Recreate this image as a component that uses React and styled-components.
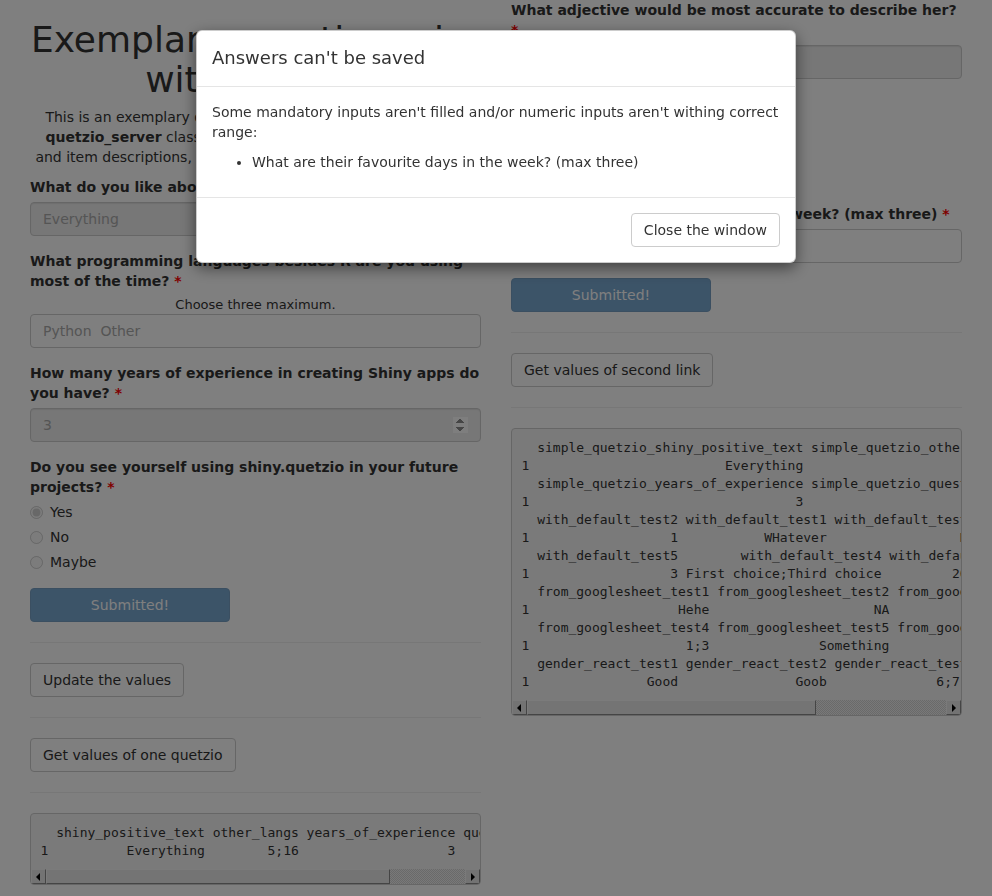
import React from 'react';
import styled, { createGlobalStyle } from 'styled-components';

const GlobalStyle = createGlobalStyle`
  * {
    box-sizing: border-box;
  }
  html,
  body {
    margin: 0;
    padding: 0;
  }
  body {
    font-family: "DejaVu Sans", "Liberation Sans", sans-serif;
    font-size: 14px;
    line-height: 20px;
    color: #333;
    background: #fff;
  }
  input[type='number']::-webkit-inner-spin-button {
    opacity: 1;
  }
`;

const Page = styled.div`
  display: grid;
  grid-template-columns: 451px 451px;
  column-gap: 30px;
  padding: 0 30px;
  align-items: start;
`;

const Column = styled.div`
  min-width: 0;
`;

const Title = styled.h1`
  margin: 20px 0 8px;
  font-size: 36px;
  line-height: 1.1;
  font-weight: 500;
  text-align: center;
  white-space: nowrap;
`;

const Intro = styled.p`
  margin: 0 0 10px;
  text-align: center;
`;

const Field = styled.div`
  margin-bottom: ${(props) => props.$gap || 15}px;
`;

const Label = styled.label`
  display: block;
  margin-bottom: 5px;
  font-weight: bold;
`;

const Required = styled.span`
  color: red;
`;

const Help = styled.div`
  font-size: 13px;
  line-height: 18px;
  text-align: center;
`;

const TextInput = styled.input`
  display: block;
  width: 100%;
  height: 34px;
  padding: 6px 12px;
  font: inherit;
  color: #aaa;
  background: #eee;
  border: 1px solid #ccc;
  border-radius: 4px;
  box-shadow: inset 0 1px 1px rgba(0, 0, 0, 0.075);
  opacity: 1;
`;

const SelectBox = styled.div`
  height: 34px;
  padding: 6px 12px;
  color: #aaa;
  background: #fff;
  border: 1px solid #ccc;
  border-radius: 4px;
  white-space: pre;
`;

const RadioList = styled.div`
  display: flex;
  flex-direction: column;
  gap: 5px;
`;

const RadioRow = styled.label`
  display: flex;
  align-items: center;
  gap: 7px;
  height: 20px;
  input {
    margin: 0;
    width: 13px;
    height: 13px;
  }
`;

const Button = styled.button`
  display: block;
  width: ${(props) => (props.$wide ? '200px' : 'max-content')};
  height: 34px;
  padding: 6px 12px;
  font: inherit;
  color: ${(props) => (props.$primary ? '#fff' : '#333')};
  background: ${(props) => (props.$primary ? '#337ab7' : '#fff')};
  border: 1px solid ${(props) => (props.$primary ? '#2e6da4' : '#ccc')};
  border-radius: 4px;
  &:disabled {
    opacity: 0.65;
  }
`;

const Rule = styled.hr`
  margin: 20px 0;
  border: 0;
  border-top: 1px solid #eee;
`;

const OutputFrame = styled.div`
  margin: 0 0 10px;
  background: #f5f5f5;
  border: 1px solid #ccc;
  border-radius: 4px;
  overflow: hidden;
`;

const Code = styled.pre`
  margin: 0;
  padding: 9.5px;
  font-family: "DejaVu Sans Mono", "Liberation Mono", monospace;
  font-size: 13px;
  line-height: 18px;
  color: #333;
  white-space: pre;
  overflow: hidden;
`;

const ScrollBar = styled.div`
  display: flex;
  height: 15px;
`;

const ScrollArrow = styled.div`
  position: relative;
  flex: 0 0 15px;
  background: #e6e6e6;
  border-top: 1px solid #f4f4f4;
  border-left: 1px solid #f4f4f4;
  border-right: 1px solid #8a8a8a;
  border-bottom: 1px solid #8a8a8a;
  &::before {
    content: '';
    position: absolute;
    top: 3px;
    left: ${(props) => (props.$dir === 'left' ? '4px' : '5px')};
    border-top: 4px solid transparent;
    border-bottom: 4px solid transparent;
    ${(props) =>
      props.$dir === 'left'
        ? 'border-right: 4px solid #000;'
        : 'border-left: 4px solid #000;'}
  }
`;

const ScrollTrack = styled.div`
  flex: 1;
  display: flex;
  background: repeating-conic-gradient(#d4d4d4 0 25%, #f2f2f2 0 50%) 0 0 / 2px
    2px;
`;

const ScrollThumb = styled.div`
  height: 100%;
  background: #e9e9e9;
  border-top: 1px solid #f6f6f6;
  border-left: 1px solid #f6f6f6;
  border-right: 1px solid #8a8a8a;
  border-bottom: 1px solid #8a8a8a;
`;

const Backdrop = styled.div`
  position: fixed;
  inset: 0;
  z-index: 1040;
  background: rgba(0, 0, 0, 0.5);
`;

const ModalLayer = styled.div`
  position: fixed;
  inset: 0;
  z-index: 1050;
  overflow: hidden;
`;

const Dialog = styled.div`
  width: 600px;
  margin: 30px auto;
  background: #fff;
  border: 1px solid rgba(0, 0, 0, 0.2);
  border-radius: 6px;
  box-shadow: 0 5px 15px rgba(0, 0, 0, 0.5);
`;

const DialogHeader = styled.div`
  padding: 14px 15px 15px;
  border-bottom: 1px solid #e5e5e5;
`;

const DialogTitle = styled.h4`
  margin: 0;
  font-size: 18px;
  line-height: 1.42857143;
  font-weight: 500;
`;

const DialogBody = styled.div`
  padding: 15px;
  p {
    margin: 0 0 10px;
  }
  ul {
    margin: 0 0 10px;
    padding-left: 40px;
  }
`;

const DialogFooter = styled.div`
  display: flex;
  justify-content: flex-end;
  padding: 15px;
  border-top: 1px solid #e5e5e5;
`;

// mimic R's print.data.frame output (one row, row name "1")
const frame = (cols) => {
  const widths = cols.map(([name, value]) => Math.max(name.length, value.length));
  const head = ' ' + cols.map(([name], i) => ' ' + name.padStart(widths[i])).join('');
  const row = '1' + cols.map(([, value], i) => ' ' + value.padStart(widths[i])).join('');
  return head + '\n' + row;
};

const firstOutput = frame([
  ['shiny_positive_text', 'Everything'],
  ['other_langs', '5;16'],
  ['years_of_experience', '3'],
  ['quetzio_future', 'Yes'],
]);

const secondOutput = [
  frame([
    ['simple_quetzio_shiny_positive_text', 'Everything'],
    ['simple_quetzio_other_langs', '5;16'],
  ]),
  frame([
    ['simple_quetzio_years_of_experience', '3'],
    ['simple_quetzio_question_future_projects', 'Yes'],
  ]),
  frame([
    ['with_default_test2', '1'],
    ['with_default_test1', 'WHatever'],
    ['with_default_test3', 'NA'],
  ]),
  frame([
    ['with_default_test5', '3'],
    ['with_default_test4', 'First choice;Third choice'],
    ['with_default_test6', '2021-09-15'],
  ]),
  frame([
    ['from_googlesheet_test1', 'Hehe'],
    ['from_googlesheet_test2', 'NA'],
    ['from_googlesheet_test3', 'Yes'],
  ]),
  frame([
    ['from_googlesheet_test4', '1;3'],
    ['from_googlesheet_test5', 'Something'],
    ['from_googlesheet_test6', '3'],
  ]),
  frame([
    ['gender_react_test1', 'Good'],
    ['gender_react_test2', 'Goob'],
    ['gender_react_test3', '6;7;8'],
  ]),
].join('\n');

const Radios = ({ name, options, checked }) => (
  <RadioList>
    {options.map((option) => (
      <RadioRow key={option}>
        <input
          type="radio"
          name={name}
          disabled
          defaultChecked={option === checked}
        />
        {option}
      </RadioRow>
    ))}
  </RadioList>
);

// verbatim output box with a horizontal scroll bar; thumb is the visible share
const Output = ({ text, visible }) => (
  <OutputFrame>
    <Code>{text}</Code>
    <ScrollBar>
      <ScrollArrow $dir="left" />
      <ScrollTrack>
        <ScrollThumb style={{ width: `${visible * 100}%` }} />
      </ScrollTrack>
      <ScrollArrow $dir="right" />
    </ScrollBar>
  </OutputFrame>
);

const App = () => {
  return (
    <>
      <GlobalStyle />
      <Page>
        <Column>
          <Title>
            Exemplary questionnaire
            <br />
            with quetzio
          </Title>
          <Intro>
            This is an exemplary questionnaire which was generated by
            <br />
            <b>quetzio_server</b> class. It contains each type of input, labels
            <br />
            and item descriptions, instructions, validation and much more.
          </Intro>
          <Field>
            <Label>
              What do you like about shiny? <Required>*</Required>
            </Label>
            <TextInput disabled value="Everything" readOnly />
          </Field>
          <Field>
            <Label>
              What programming languages besides R are you using most of the
              time? <Required>*</Required>
            </Label>
            <Help>Choose three maximum.</Help>
            <SelectBox>Python  Other</SelectBox>
          </Field>
          <Field>
            <Label>
              How many years of experience in creating Shiny apps do you have?{' '}
              <Required>*</Required>
            </Label>
            <TextInput type="number" disabled value="3" readOnly />
          </Field>
          <Field $gap={16}>
            <Label>
              Do you see yourself using shiny.quetzio in your future projects?{' '}
              <Required>*</Required>
            </Label>
            <Radios
              name="future"
              options={['Yes', 'No', 'Maybe']}
              checked="Yes"
            />
          </Field>
          <Button $primary $wide disabled>
            Submitted!
          </Button>
          <Rule />
          <Button>Update the values</Button>
          <Rule />
          <Button>Get values of one quetzio</Button>
          <Rule />
          <Output text={firstOutput} visible={0.82} />
        </Column>
        <Column>
          <Field>
            <Label>
              What adjective would be most accurate to describe her?{' '}
              <Required>*</Required>
            </Label>
            <TextInput disabled value="Lovely" readOnly />
          </Field>
          <Field>
            <Label>
              What is her gender? <Required>*</Required>
            </Label>
            <Radios
              name="gender"
              options={['Female', 'Male', 'Other']}
              checked="Female"
            />
          </Field>
          <Field>
            <Label>
              What are their favorite days in the week? (max three){' '}
              <Required>*</Required>
            </Label>
            <SelectBox />
          </Field>
          <Button $primary $wide disabled>
            Submitted!
          </Button>
          <Rule />
          <Button>Get values of second link</Button>
          <Rule />
          <Output text={secondOutput} visible={0.69} />
        </Column>
      </Page>
      <Backdrop />
      <ModalLayer>
        <Dialog>
          <DialogHeader>
            <DialogTitle>Answers can't be saved</DialogTitle>
          </DialogHeader>
          <DialogBody>
            <p>
              Some mandatory inputs aren't filled and/or numeric inputs aren't
              withing correct range:
            </p>
            <ul>
              <li>What are their favourite days in the week? (max three)</li>
            </ul>
          </DialogBody>
          <DialogFooter>
            <Button>Close the window</Button>
          </DialogFooter>
        </Dialog>
      </ModalLayer>
    </>
  );
};

export default App;
